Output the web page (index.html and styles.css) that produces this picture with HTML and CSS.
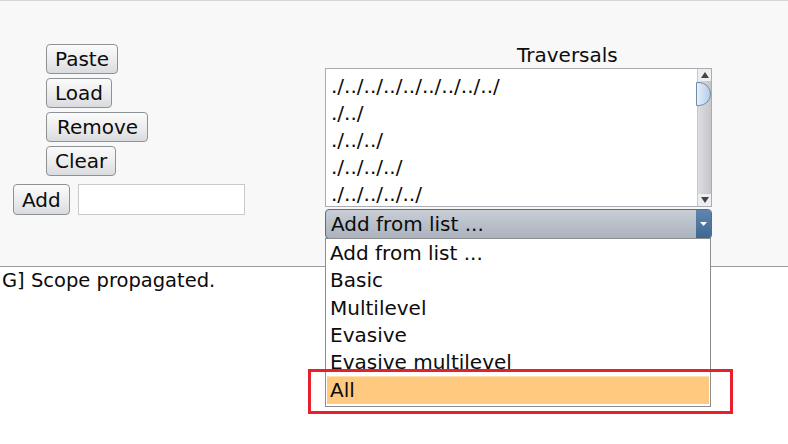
FILE: index.html
```html
<!DOCTYPE html>
<html>
<head>
<meta charset="utf-8">
<link rel="stylesheet" href="styles.css">
</head>
<body>
<div class="panel">
  <div class="left">
    <div class="btns">
      <button class="btn">Paste</button>
      <button class="btn">Load</button>
      <button class="btn wide">Remove</button>
      <button class="btn">Clear</button>
    </div>
    <div class="addrow">
      <button class="btn">Add</button>
      <div class="field"></div>
    </div>
  </div>
  <div class="right">
    <div class="label">Traversals</div>
    <div class="list">
      <div class="items">
        <div class="item">./../../../../../../../../</div>
        <div class="item">./../</div>
        <div class="item">./../../</div>
        <div class="item">./../../../</div>
        <div class="item">./../../../../</div>
      </div>
      <div class="sbar">
        <div class="arrow up"></div>
        <div class="track"><div class="thumb"></div></div>
        <div class="arrow down"></div>
      </div>
    </div>
    <div class="combo">
      <div class="ctext">Add from list ...</div>
      <div class="cbtn"><svg width="7" height="4" viewBox="0 0 7 4"><path d="M0 0H7L3.5 4Z" fill="#fff"/></svg></div>
    </div>
    <div class="popup">
      <div class="pitem">Add from list ...</div>
      <div class="pitem">Basic</div>
      <div class="pitem">Multilevel</div>
      <div class="pitem">Evasive</div>
      <div class="pitem">Evasive multilevel</div>
      <div class="pitem sel">All</div>
    </div>
    <div class="mark"></div>
  </div>
</div>
<div class="log">G] Scope propagated.</div>
</body>
</html>
```
FILE: styles.css
```css
html, body {
  margin: 0;
  padding: 0;
  background: #fff;
  font-family: "DejaVu Sans", sans-serif;
  font-size: 20px;
  color: #0c0c0c;
}
html { height: 100%; }
body { min-height: 444px; }
.panel {
  height: 265px;
  background: #f8f8f8;
  border-top: 1px solid #d6d6d6;
  border-bottom: 1px solid #9a9a9a;
  display: flex;
}
.left {
  width: 325px;
  padding-top: 43px;
  box-sizing: border-box;
}
.btns {
  display: flex;
  flex-direction: column;
  align-items: flex-start;
  gap: 4px;
  padding-left: 46px;
}
.btn {
  font-family: inherit;
  font-size: 20px;
  color: #0c0c0c;
  height: 30px;
  padding: 0 8px;
  border: 1px solid #8f9295;
  border-radius: 4px;
  background: linear-gradient(#fbfbfb, #e9eaec 60%, #d9dbde);
  line-height: 26px;
}
.btn.wide {
  padding: 0 9px 0 10px;
}
.addrow {
  display: flex;
  gap: 8px;
  margin-top: 8px;
  padding-left: 13px;
}
.addrow .btn {
  height: 31px;
}
.field {
  width: 167px;
  height: 31px;
  box-sizing: border-box;
  background: #fff;
  border: 1px solid #c9c9c9;
}
.right {
  position: relative;
  width: 387px;
}
.label {
  padding-left: 192px;
  padding-top: 44px;
  line-height: 20px;
  height: 20px;
}
.list {
  margin-top: 3px;
  height: 139px;
  box-sizing: border-box;
  border: 1px solid #a9adb3;
  background: #fff;
  display: flex;
  overflow: hidden;
}
.items {
  flex: 1;
  padding: 4px 0 0 5px;
}
.item {
  height: 27px;
  line-height: 27px;
  white-space: nowrap;
}
.sbar {
  width: 13px;
  border-left: 1px solid #c6c8cc;
  display: flex;
  flex-direction: column;
  background: linear-gradient(90deg, #dcdde0, #c4c6ca);
}
.arrow {
  height: 12px;
  background: #eceef0;
  position: relative;
}
.arrow::after {
  content: "";
  position: absolute;
  left: 3px;
  border-left: 4px solid transparent;
  border-right: 4px solid transparent;
}
.arrow.up::after { top: 3px; border-bottom: 6px solid #444; }
.arrow.down::after { top: 3px; border-top: 6px solid #444; }
.track {
  flex: 1;
  padding-top: 1px;
}
.thumb {
  height: 22px;
  margin-left: -2px;
  border: 1px solid #6f8cab;
  border-radius: 0 12px 12px 0;
  background: linear-gradient(90deg, #e6f0fa, #b5cde6);
}
.combo {
  margin-top: 2px;
  height: 30px;
  box-sizing: border-box;
  border: 1px solid #4e6f92;
  border-radius: 4px;
  display: flex;
  overflow: hidden;
  background: linear-gradient(#c9ced6, #aab2bd);
}
.ctext {
  flex: 1;
  padding-left: 5px;
  line-height: 28px;
}
.cbtn {
  width: 15px;
  background: linear-gradient(#5f86b0, #3e6792);
  display: flex;
  align-items: center;
  justify-content: center;
}
.popup {
  position: absolute;
  z-index: 2;
  left: 0;
  top: 237px;
  width: 386px;
  box-sizing: border-box;
  border: 1px solid #8d8d8d;
  background: #fff;
  padding: 1px 1px 2px 1px;
}
.pitem {
  height: 27.3px;
  line-height: 27px;
  padding-left: 3px;
}
.pitem.sel {
  height: 28px;
  background: #ffca80;
  border-top: 1px solid #ffe0b0;
  box-sizing: border-box;
}
.mark {
  position: absolute;
  z-index: 3;
  left: -17px;
  top: 368px;
  width: 425px;
  height: 45px;
  box-sizing: border-box;
  border: 3px solid #e8202c;
}
.log {
  padding-left: 2px;
  line-height: 28px;
  font-size: 19.5px;
}
```
